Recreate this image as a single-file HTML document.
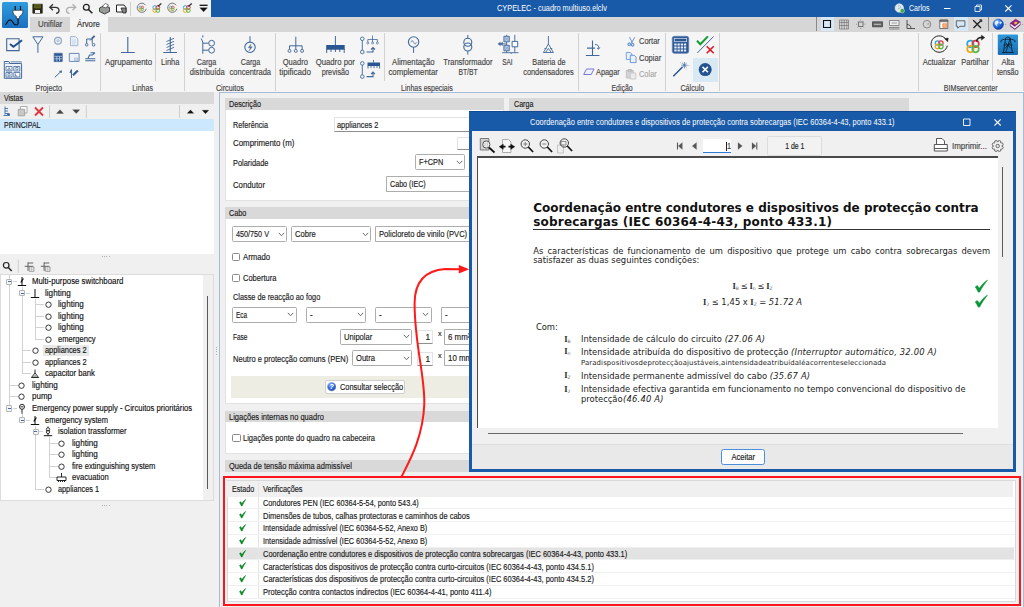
<!DOCTYPE html>
<html lang="pt"><head><meta charset="utf-8"><title>CYPELEC - cuadro multiuso.elclv</title>
<style>
html,body{margin:0;padding:0;}
body{width:1024px;height:607px;overflow:hidden;background:#f0f0f0;position:relative;font-family:"Liberation Sans",sans-serif;}
.r{position:absolute;box-sizing:border-box;display:block;}
.t{position:absolute;white-space:pre;display:block;-webkit-text-stroke:0.16px currentColor;}
</style></head><body>
<div class="r" style="left:0.0px;top:0.0px;width:1024.0px;height:16.5px;background:#f3f3f3;"></div>
<div class="r" style="left:211.0px;top:0.0px;width:813.0px;height:16.5px;background:#185aa7;"></div>
<div class="r" style="left:0.0px;top:16.5px;width:1024.0px;height:15.0px;background:#d6d6d6;"></div>
<div class="r" style="left:0.0px;top:16.5px;width:29.5px;height:15.0px;background:#f3f3f3;"></div>
<div class="r" style="left:69.5px;top:16.5px;width:38.0px;height:15.5px;background:#f5f5f5;"></div>
<div class="r" style="left:0.0px;top:31.5px;width:1024.0px;height:60.0px;background:#f5f5f5;"></div>
<div class="r" style="left:2px;top:2px;width:25.5px;height:26px;border-radius:1.5px;background:linear-gradient(#2e9ddf,#1a6fc0);"></div>
<svg class="r" style="left:2.0px;top:2.0px;" width="26" height="26" viewBox="0 0 26 26"><path d="M13.2 4v4.5M18.5 4v4.5" stroke="#111" stroke-width="1.2" fill="none"/><path d="M10.8 8.3h10.2c0 3.5-1.5 5-3.6 6.2v2.2h-3v-2.2c-2.1-1.2-3.6-2.700-3.600-6.200z" fill="#fff" stroke="#111" stroke-width=".6"/><path d="M16 16.500c0 4 1 6.500-2 6.500c-3.500 0-2.800-5.200-6-5.200c-2.500 0-2.600 3.600-4.600 5" stroke="#111" stroke-width="1.200" fill="none"/></svg>
<span class="t" style="left:37.6px;transform-origin:0 50%;top:17.5px;font-size:9.2px;line-height:12.0px;color:#444444;transform:scaleX(0.852);">Unifilar</span>
<span class="t" style="left:77.2px;transform-origin:0 50%;top:17.5px;font-size:9.2px;line-height:12.0px;color:#333;transform:scaleX(0.841);">Árvore</span>
<span class="t" style="left:497.0px;transform-origin:0 50%;top:1.6px;font-size:9.2px;line-height:12.0px;color:#fff;transform:scaleX(0.803);-webkit-text-stroke:0;">CYPELEC - cuadro multiuso.elclv</span>
<span class="t" style="left:908.5px;transform-origin:0 50%;top:1.6px;font-size:9.2px;line-height:12.0px;color:#fff;transform:scaleX(0.771);-webkit-text-stroke:0;">Carlos</span>
<div class="r" style="left:0.0px;top:92.0px;width:213.5px;height:12.0px;background:#d9d9d9;"></div>
<span class="t" style="left:3.5px;transform-origin:0 50%;top:92.0px;font-size:9.2px;line-height:12.0px;color:#1a1a1a;transform:scaleX(0.763);">Vistas</span>
<div class="r" style="left:0.0px;top:104.0px;width:213.5px;height:15.0px;background:#f0f0f0;"></div>
<div class="r" style="left:0.0px;top:119.0px;width:213.5px;height:12.0px;background:#cce8ff;"></div>
<span class="t" style="left:3.5px;transform-origin:0 50%;top:119.0px;font-size:9.2px;line-height:12.0px;color:#1a1a1a;transform:scaleX(0.762);">PRINCIPAL</span>
<div class="r" style="left:0.0px;top:131.0px;width:213.5px;height:122.5px;background:#ffffff;"></div>
<div class="r" style="left:219.0px;top:92.0px;width:805.0px;height:520.0px;background:#f0f0f0;border:1px solid #a6bbd6;"></div>
<div class="r" style="left:225.0px;top:97.9px;width:279.0px;height:103.3px;background:#ffffff;border:1px solid #e2e2e2;"></div>
<div class="r" style="left:225.0px;top:97.9px;width:279.0px;height:11.9px;background:#d9d9d9;"></div>
<span class="t" style="left:229.2px;transform-origin:0 50%;top:98.4px;font-size:9.2px;line-height:12.0px;color:#1a1a1a;transform:scaleX(0.782);">Descrição</span>
<div class="r" style="left:509.4px;top:97.9px;width:399.6px;height:12.7px;background:#d9d9d9;"></div>
<span class="t" style="left:513.7px;transform-origin:0 50%;top:98.3px;font-size:9.2px;line-height:12.0px;color:#1a1a1a;transform:scaleX(0.774);">Carga</span>
<div class="r" style="left:225.0px;top:207.3px;width:279.0px;height:197.0px;background:#ffffff;border:1px solid #e2e2e2;"></div>
<div class="r" style="left:225.0px;top:207.3px;width:279.0px;height:11.7px;background:#d9d9d9;"></div>
<span class="t" style="left:229.4px;transform-origin:0 50%;top:207.2px;font-size:9.2px;line-height:12.0px;color:#1a1a1a;transform:scaleX(0.791);">Cabo</span>
<div class="r" style="left:225.0px;top:411.2px;width:279.0px;height:42.6px;background:#ffffff;border:1px solid #e2e2e2;"></div>
<div class="r" style="left:225.0px;top:411.2px;width:279.0px;height:11.3px;background:#d9d9d9;"></div>
<span class="t" style="left:229.2px;transform-origin:0 50%;top:410.9px;font-size:9.2px;line-height:12.0px;color:#1a1a1a;transform:scaleX(0.818);">Ligações internas no quadro</span>
<div class="r" style="left:225.0px;top:460.0px;width:279.0px;height:12.0px;background:#d9d9d9;"></div>
<span class="t" style="left:229.2px;transform-origin:0 50%;top:460.0px;font-size:9.2px;line-height:12.0px;color:#1a1a1a;transform:scaleX(0.813);">Queda de tensão máxima admissível</span>
<div class="r" style="left:226.5px;top:479.5px;width:789.8px;height:122.0px;background:#ffffff;border:1px solid #d9d9d9;"></div>
<div class="r" style="left:227.0px;top:481.0px;width:786.0px;height:15.5px;background:#f0f0f0;"></div>
<div class="r" style="left:223.2px;top:476.3px;width:797.8px;height:129.4px;border:2.200px solid #ff141c;"></div>
<div class="r" style="left:0.0px;top:274.0px;width:213.5px;height:226.5px;background:#ffffff;border:1px solid #dcdcdc;"></div>
<div class="r" style="left:202.5px;top:275.0px;width:10.5px;height:224.5px;background:#f0f0f0;"></div>
<div class="r" style="left:206.8px;top:296.0px;width:1.3px;height:193.0px;background:#5a5a5a;"></div>
<div class="r" style="left:8.6px;top:275.0px;width:1.0px;height:129.9px;background:#d2d2d2;"></div>
<div class="r" style="left:21.9px;top:287.0px;width:1.0px;height:86.3px;background:#d2d2d2;"></div>
<div class="r" style="left:35.2px;top:298.5px;width:1.0px;height:40.2px;background:#d2d2d2;"></div>
<div class="r" style="left:21.9px;top:413.9px;width:1.0px;height:3.5px;background:#d2d2d2;"></div>
<div class="r" style="left:35.2px;top:425.5px;width:1.0px;height:63.2px;background:#d2d2d2;"></div>
<div class="r" style="left:48.5px;top:437.0px;width:1.0px;height:40.2px;background:#d2d2d2;"></div>
<div class="r" style="left:43.0px;top:344.5px;width:45.5px;height:11.5px;background:#e8e8e8;"></div>
<div class="r" style="left:12.6px;top:281.0px;width:4.1px;height:1.0px;background:#d2d2d2;"></div>
<div class="r" style="left:6.0px;top:278.5px;width:6.2px;height:6.2px;background:#f6f6f6;border:1px solid #b4b4b4;border-radius:1px;"></div>
<div class="r" style="left:7.5px;top:281.1px;width:3.2px;height:1.0px;background:#4468b0;"></div>
<svg class="r" style="left:16.7px;top:276.0px;" width="10" height="12" viewBox="0 0 10 12"><path d="M5 1v8.500M0.800 9.500h8.400" stroke="#111" stroke-width="1" fill="none"/><path d="M3.800 6.500l2.600-4" stroke="#111" stroke-width="1.300"/></svg>
<span class="t" style="left:31.6px;transform-origin:0 50%;top:275.0px;font-size:9.2px;line-height:12.0px;color:#111;transform:scaleX(0.852);">Multi-purpose switchboard</span>
<div class="r" style="left:25.9px;top:292.5px;width:4.1px;height:1.0px;background:#d2d2d2;"></div>
<div class="r" style="left:19.3px;top:290.0px;width:6.2px;height:6.2px;background:#f6f6f6;border:1px solid #b4b4b4;border-radius:1px;"></div>
<div class="r" style="left:20.8px;top:292.6px;width:3.2px;height:1.0px;background:#4468b0;"></div>
<svg class="r" style="left:30.0px;top:287.5px;" width="10" height="12" viewBox="0 0 10 12"><path d="M5 1v8.500M0.800 9.500h8.400" stroke="#111" stroke-width="1" fill="none"/></svg>
<span class="t" style="left:44.9px;transform-origin:0 50%;top:286.5px;font-size:9.2px;line-height:12.0px;color:#111;transform:scaleX(0.885);">lighting</span>
<div class="r" style="left:35.2px;top:304.1px;width:9.1px;height:1.0px;background:#d2d2d2;"></div>
<svg class="r" style="left:43.8px;top:300.1px;" width="9" height="9" viewBox="0 0 9 9"><circle cx="4.5" cy="4.700" r="2.700" fill="#fff" stroke="#222" stroke-width="0.9"/></svg>
<span class="t" style="left:58.2px;transform-origin:0 50%;top:298.1px;font-size:9.2px;line-height:12.0px;color:#111;transform:scaleX(0.885);">lighting</span>
<div class="r" style="left:35.2px;top:315.6px;width:9.1px;height:1.0px;background:#d2d2d2;"></div>
<svg class="r" style="left:43.8px;top:311.6px;" width="9" height="9" viewBox="0 0 9 9"><circle cx="4.5" cy="4.700" r="2.700" fill="#fff" stroke="#222" stroke-width="0.9"/></svg>
<span class="t" style="left:58.2px;transform-origin:0 50%;top:309.6px;font-size:9.2px;line-height:12.0px;color:#111;transform:scaleX(0.885);">lighting</span>
<div class="r" style="left:35.2px;top:327.2px;width:9.1px;height:1.0px;background:#d2d2d2;"></div>
<svg class="r" style="left:43.8px;top:323.2px;" width="9" height="9" viewBox="0 0 9 9"><circle cx="4.5" cy="4.700" r="2.700" fill="#fff" stroke="#222" stroke-width="0.9"/></svg>
<span class="t" style="left:58.2px;transform-origin:0 50%;top:321.2px;font-size:9.2px;line-height:12.0px;color:#111;transform:scaleX(0.885);">lighting</span>
<div class="r" style="left:35.2px;top:338.7px;width:9.1px;height:1.0px;background:#d2d2d2;"></div>
<svg class="r" style="left:43.8px;top:334.7px;" width="9" height="9" viewBox="0 0 9 9"><circle cx="4.5" cy="4.700" r="2.700" fill="#fff" stroke="#222" stroke-width="0.9"/></svg>
<span class="t" style="left:58.2px;transform-origin:0 50%;top:332.7px;font-size:9.2px;line-height:12.0px;color:#111;transform:scaleX(0.826);">emergency</span>
<div class="r" style="left:21.9px;top:350.2px;width:9.1px;height:1.0px;background:#d2d2d2;"></div>
<svg class="r" style="left:30.5px;top:346.2px;" width="9" height="9" viewBox="0 0 9 9"><circle cx="4.5" cy="4.700" r="2.700" fill="#fff" stroke="#222" stroke-width="0.9"/></svg>
<span class="t" style="left:44.9px;transform-origin:0 50%;top:344.2px;font-size:9.2px;line-height:12.0px;color:#111;transform:scaleX(0.807);">appliances 2</span>
<div class="r" style="left:21.9px;top:361.8px;width:9.1px;height:1.0px;background:#d2d2d2;"></div>
<svg class="r" style="left:30.5px;top:357.8px;" width="9" height="9" viewBox="0 0 9 9"><circle cx="4.5" cy="4.700" r="2.700" fill="#fff" stroke="#222" stroke-width="0.9"/></svg>
<span class="t" style="left:44.9px;transform-origin:0 50%;top:355.8px;font-size:9.2px;line-height:12.0px;color:#111;transform:scaleX(0.807);">appliances 2</span>
<div class="r" style="left:21.9px;top:373.3px;width:9.1px;height:1.0px;background:#d2d2d2;"></div>
<svg class="r" style="left:30.0px;top:368.3px;" width="10" height="12" viewBox="0 0 10 12"><path d="M5 1.500v3.500M5 5l-3.600 4.500h7.200z" stroke="#111" stroke-width="0.9" fill="none"/><path d="M3 9.500l2-2 2 2" stroke="#111" stroke-width="0.7" fill="none"/></svg>
<span class="t" style="left:44.9px;transform-origin:0 50%;top:367.3px;font-size:9.2px;line-height:12.0px;color:#111;transform:scaleX(0.836);">capacitor bank</span>
<div class="r" style="left:8.6px;top:384.9px;width:9.1px;height:1.0px;background:#d2d2d2;"></div>
<svg class="r" style="left:17.2px;top:380.9px;" width="9" height="9" viewBox="0 0 9 9"><circle cx="4.5" cy="4.700" r="2.700" fill="#fff" stroke="#222" stroke-width="0.9"/></svg>
<span class="t" style="left:31.6px;transform-origin:0 50%;top:378.9px;font-size:9.2px;line-height:12.0px;color:#111;transform:scaleX(0.885);">lighting</span>
<div class="r" style="left:8.6px;top:396.4px;width:9.1px;height:1.0px;background:#d2d2d2;"></div>
<svg class="r" style="left:17.2px;top:392.4px;" width="9" height="9" viewBox="0 0 9 9"><circle cx="4.5" cy="4.700" r="2.700" fill="#fff" stroke="#222" stroke-width="0.9"/></svg>
<span class="t" style="left:31.6px;transform-origin:0 50%;top:390.4px;font-size:9.2px;line-height:12.0px;color:#111;transform:scaleX(0.869);">pump</span>
<div class="r" style="left:12.6px;top:407.9px;width:4.1px;height:1.0px;background:#d2d2d2;"></div>
<div class="r" style="left:6.0px;top:405.4px;width:6.2px;height:6.2px;background:#f6f6f6;border:1px solid #b4b4b4;border-radius:1px;"></div>
<div class="r" style="left:7.5px;top:408.0px;width:3.2px;height:1.0px;background:#4468b0;"></div>
<svg class="r" style="left:16.7px;top:402.9px;" width="10" height="12" viewBox="0 0 10 12"><circle cx="5" cy="3.800" r="2.500" fill="#fff" stroke="#111" stroke-width="0.9"/><path d="M5 6.300v4.500M3.500 3.800h3" stroke="#111" stroke-width="0.9" fill="none"/></svg>
<span class="t" style="left:31.6px;transform-origin:0 50%;top:401.9px;font-size:9.2px;line-height:12.0px;color:#111;transform:scaleX(0.832);">Emergency power supply - Circuitos prioritários</span>
<div class="r" style="left:25.9px;top:419.5px;width:4.1px;height:1.0px;background:#d2d2d2;"></div>
<div class="r" style="left:19.3px;top:417.0px;width:6.2px;height:6.2px;background:#f6f6f6;border:1px solid #b4b4b4;border-radius:1px;"></div>
<div class="r" style="left:20.8px;top:419.6px;width:3.2px;height:1.0px;background:#4468b0;"></div>
<svg class="r" style="left:30.0px;top:414.5px;" width="10" height="12" viewBox="0 0 10 12"><path d="M5 1v8.500M0.800 9.500h8.400" stroke="#111" stroke-width="1" fill="none"/><path d="M3.800 6.500l2.600-4" stroke="#111" stroke-width="1.300"/></svg>
<span class="t" style="left:44.9px;transform-origin:0 50%;top:413.5px;font-size:9.2px;line-height:12.0px;color:#111;transform:scaleX(0.816);">emergency system</span>
<div class="r" style="left:39.2px;top:431.0px;width:4.1px;height:1.0px;background:#d2d2d2;"></div>
<div class="r" style="left:32.6px;top:428.5px;width:6.2px;height:6.2px;background:#f6f6f6;border:1px solid #b4b4b4;border-radius:1px;"></div>
<div class="r" style="left:34.1px;top:431.1px;width:3.2px;height:1.0px;background:#4468b0;"></div>
<svg class="r" style="left:43.3px;top:426.0px;" width="10" height="12" viewBox="0 0 10 12"><circle cx="5" cy="3.400" r="1.700" fill="none" stroke="#111" stroke-width="0.8"/><circle cx="5" cy="5.900" r="1.700" fill="none" stroke="#111" stroke-width="0.8"/><path d="M5 0.500v1.200M5 7.600v2M0.800 9.700h8.400" stroke="#111" stroke-width="1" fill="none"/></svg>
<span class="t" style="left:58.2px;transform-origin:0 50%;top:425.0px;font-size:9.2px;line-height:12.0px;color:#111;transform:scaleX(0.829);">isolation trassformer</span>
<div class="r" style="left:48.5px;top:442.6px;width:9.1px;height:1.0px;background:#d2d2d2;"></div>
<svg class="r" style="left:57.1px;top:438.6px;" width="9" height="9" viewBox="0 0 9 9"><circle cx="4.5" cy="4.700" r="2.700" fill="#fff" stroke="#222" stroke-width="0.9"/></svg>
<span class="t" style="left:71.5px;transform-origin:0 50%;top:436.6px;font-size:9.2px;line-height:12.0px;color:#111;transform:scaleX(0.885);">lighting</span>
<div class="r" style="left:48.5px;top:454.1px;width:9.1px;height:1.0px;background:#d2d2d2;"></div>
<svg class="r" style="left:57.1px;top:450.1px;" width="9" height="9" viewBox="0 0 9 9"><circle cx="4.5" cy="4.700" r="2.700" fill="#fff" stroke="#222" stroke-width="0.9"/></svg>
<span class="t" style="left:71.5px;transform-origin:0 50%;top:448.1px;font-size:9.2px;line-height:12.0px;color:#111;transform:scaleX(0.885);">lighting</span>
<div class="r" style="left:48.5px;top:465.6px;width:9.1px;height:1.0px;background:#d2d2d2;"></div>
<svg class="r" style="left:57.1px;top:461.6px;" width="9" height="9" viewBox="0 0 9 9"><circle cx="4.5" cy="4.700" r="2.700" fill="#fff" stroke="#222" stroke-width="0.9"/></svg>
<span class="t" style="left:71.5px;transform-origin:0 50%;top:459.6px;font-size:9.2px;line-height:12.0px;color:#111;transform:scaleX(0.829);">fire extinguishing system</span>
<div class="r" style="left:48.5px;top:477.2px;width:9.1px;height:1.0px;background:#d2d2d2;"></div>
<svg class="r" style="left:56.1px;top:472.2px;" width="11" height="12" viewBox="0 0 11 12"><path d="M5.500 1v4M1 5h9v3.500h-9zM2.500 8.500v1.500M4.500 8.500v1.500M6.500 8.500v1.500M8.500 8.500v1.500" stroke="#111" stroke-width="0.9" fill="none"/></svg>
<span class="t" style="left:71.5px;transform-origin:0 50%;top:471.2px;font-size:9.2px;line-height:12.0px;color:#111;transform:scaleX(0.825);">evacuation</span>
<div class="r" style="left:35.2px;top:488.7px;width:9.1px;height:1.0px;background:#d2d2d2;"></div>
<svg class="r" style="left:43.8px;top:484.7px;" width="9" height="9" viewBox="0 0 9 9"><circle cx="4.5" cy="4.700" r="2.700" fill="#fff" stroke="#222" stroke-width="0.9"/></svg>
<span class="t" style="left:58.2px;transform-origin:0 50%;top:482.7px;font-size:9.2px;line-height:12.0px;color:#111;transform:scaleX(0.794);">appliances 1</span>
<div class="r" style="left:102.0px;top:256.3px;width:1.1px;height:1.1px;background:#b0b0b0;"></div>
<div class="r" style="left:104.2px;top:256.3px;width:1.1px;height:1.1px;background:#b0b0b0;"></div>
<div class="r" style="left:106.4px;top:256.3px;width:1.1px;height:1.1px;background:#b0b0b0;"></div>
<div class="r" style="left:108.6px;top:256.3px;width:1.1px;height:1.1px;background:#b0b0b0;"></div>
<div class="r" style="left:102.0px;top:504.6px;width:1.1px;height:1.1px;background:#b0b0b0;"></div>
<div class="r" style="left:104.2px;top:504.6px;width:1.1px;height:1.1px;background:#b0b0b0;"></div>
<div class="r" style="left:106.4px;top:504.6px;width:1.1px;height:1.1px;background:#b0b0b0;"></div>
<div class="r" style="left:108.6px;top:504.6px;width:1.1px;height:1.1px;background:#b0b0b0;"></div>
<div class="r" style="left:215.7px;top:347.0px;width:1.1px;height:1.1px;background:#b0b0b0;"></div>
<div class="r" style="left:215.7px;top:349.2px;width:1.1px;height:1.1px;background:#b0b0b0;"></div>
<div class="r" style="left:215.7px;top:351.4px;width:1.1px;height:1.1px;background:#b0b0b0;"></div>
<div class="r" style="left:215.7px;top:353.6px;width:1.1px;height:1.1px;background:#b0b0b0;"></div>
<div class="r" style="left:100.1px;top:33.2px;width:1.0px;height:57.5px;background:#d2d2d2;"></div>
<div class="r" style="left:184.2px;top:33.2px;width:1.0px;height:57.5px;background:#d2d2d2;"></div>
<div class="r" style="left:274.9px;top:33.2px;width:1.0px;height:57.5px;background:#d2d2d2;"></div>
<div class="r" style="left:577.8px;top:33.2px;width:1.0px;height:57.5px;background:#d2d2d2;"></div>
<div class="r" style="left:665.2px;top:33.2px;width:1.0px;height:57.5px;background:#d2d2d2;"></div>
<div class="r" style="left:719.1px;top:33.2px;width:1.0px;height:57.5px;background:#d2d2d2;"></div>
<div class="r" style="left:918.2px;top:33.2px;width:1.0px;height:57.5px;background:#d2d2d2;"></div>
<div class="r" style="left:1022.8px;top:33.2px;width:1.0px;height:57.5px;background:#d2d2d2;"></div>
<div class="r" style="left:155.4px;top:33.2px;width:1.0px;height:47.5px;background:#d2d2d2;"></div>
<div class="r" style="left:384.1px;top:33.2px;width:1.0px;height:47.5px;background:#d2d2d2;"></div>
<div class="r" style="left:992.4px;top:33.2px;width:1.0px;height:47.5px;background:#d2d2d2;"></div>
<div class="r" style="left:130.0px;top:1.5px;width:1.0px;height:14.0px;background:#cfcfcf;"></div>
<div class="r" style="left:816.3px;top:17.3px;width:1.0px;height:13.5px;background:#8a8a8a;"></div>
<div class="r" style="left:988.0px;top:17.3px;width:1.0px;height:13.5px;background:#8a8a8a;"></div>
<span class="t" style="left:100.5px;transform-origin:50% 50%;top:56.0px;font-size:9.2px;line-height:12.0px;color:#444444;transform:scaleX(0.855);">Agrupamento</span>
<span class="t" style="left:158.6px;transform-origin:50% 50%;top:56.0px;font-size:9.2px;line-height:12.0px;color:#444444;transform:scaleX(0.811);">Linha</span>
<span class="t" style="left:194.0px;transform-origin:50% 50%;top:56.0px;font-size:9.2px;line-height:12.0px;color:#444444;transform:scaleX(0.778);">Carga</span>
<span class="t" style="left:185.5px;transform-origin:50% 50%;top:65.5px;font-size:9.2px;line-height:12.0px;color:#444444;transform:scaleX(0.825);">distribuída</span>
<span class="t" style="left:237.7px;transform-origin:50% 50%;top:56.0px;font-size:9.2px;line-height:12.0px;color:#444444;transform:scaleX(0.778);">Carga</span>
<span class="t" style="left:224.9px;transform-origin:50% 50%;top:65.5px;font-size:9.2px;line-height:12.0px;color:#444444;transform:scaleX(0.820);">concentrada</span>
<span class="t" style="left:280.1px;transform-origin:50% 50%;top:56.0px;font-size:9.2px;line-height:12.0px;color:#444444;transform:scaleX(0.823);">Quadro</span>
<span class="t" style="left:277.4px;transform-origin:50% 50%;top:65.5px;font-size:9.2px;line-height:12.0px;color:#444444;transform:scaleX(0.874);">tipificado</span>
<span class="t" style="left:312.3px;transform-origin:50% 50%;top:56.0px;font-size:9.2px;line-height:12.0px;color:#444444;transform:scaleX(0.843);">Quadro por</span>
<span class="t" style="left:317.9px;transform-origin:50% 50%;top:65.5px;font-size:9.2px;line-height:12.0px;color:#444444;transform:scaleX(0.791);">previsão</span>
<span class="t" style="left:387.7px;transform-origin:50% 50%;top:56.0px;font-size:9.2px;line-height:12.0px;color:#444444;transform:scaleX(0.840);">Alimentação</span>
<span class="t" style="left:384.1px;transform-origin:50% 50%;top:65.5px;font-size:9.2px;line-height:12.0px;color:#444444;transform:scaleX(0.849);">complementar</span>
<span class="t" style="left:437.6px;transform-origin:50% 50%;top:56.0px;font-size:9.2px;line-height:12.0px;color:#444444;transform:scaleX(0.821);">Transformador</span>
<span class="t" style="left:455.1px;transform-origin:50% 50%;top:65.5px;font-size:9.2px;line-height:12.0px;color:#444444;transform:scaleX(0.738);">BT/BT</span>
<span class="t" style="left:500.4px;transform-origin:50% 50%;top:56.0px;font-size:9.2px;line-height:12.0px;color:#444444;transform:scaleX(0.708);">SAI</span>
<span class="t" style="left:527.6px;transform-origin:50% 50%;top:56.0px;font-size:9.2px;line-height:12.0px;color:#444444;transform:scaleX(0.793);">Bateria de</span>
<span class="t" style="left:517.0px;transform-origin:50% 50%;top:65.5px;font-size:9.2px;line-height:12.0px;color:#444444;transform:scaleX(0.803);">condensadores</span>
<span class="t" style="left:919.3px;transform-origin:50% 50%;top:56.2px;font-size:9.2px;line-height:12.0px;color:#444444;transform:scaleX(0.817);">Actualizar</span>
<span class="t" style="left:957.8px;transform-origin:50% 50%;top:56.2px;font-size:9.2px;line-height:12.0px;color:#444444;transform:scaleX(0.806);">Partilhar</span>
<span class="t" style="left:1000.3px;transform-origin:50% 50%;top:56.2px;font-size:9.2px;line-height:12.0px;color:#444444;transform:scaleX(0.820);">Alta</span>
<span class="t" style="left:994.3px;transform-origin:50% 50%;top:65.6px;font-size:9.2px;line-height:12.0px;color:#444444;transform:scaleX(0.786);">tensão</span>
<span class="t" style="left:32.2px;transform-origin:50% 50%;top:81.7px;font-size:9.2px;line-height:12.0px;color:#444444;transform:scaleX(0.785);">Projecto</span>
<span class="t" style="left:128.5px;transform-origin:50% 50%;top:81.7px;font-size:9.2px;line-height:12.0px;color:#444444;transform:scaleX(0.765);">Linhas</span>
<span class="t" style="left:211.9px;transform-origin:50% 50%;top:81.7px;font-size:9.2px;line-height:12.0px;color:#444444;transform:scaleX(0.782);">Circuitos</span>
<span class="t" style="left:392.9px;transform-origin:50% 50%;top:81.7px;font-size:9.2px;line-height:12.0px;color:#444444;transform:scaleX(0.761);">Linhas especiais</span>
<span class="t" style="left:608.1px;transform-origin:50% 50%;top:81.7px;font-size:9.2px;line-height:12.0px;color:#444444;transform:scaleX(0.754);">Edição</span>
<span class="t" style="left:677.3px;transform-origin:50% 50%;top:81.7px;font-size:9.2px;line-height:12.0px;color:#444444;transform:scaleX(0.772);">Cálculo</span>
<span class="t" style="left:936.3px;transform-origin:50% 50%;top:81.7px;font-size:9.2px;line-height:12.0px;color:#444444;transform:scaleX(0.774);">BIMserver.center</span>
<span class="t" style="left:596.2px;transform-origin:0 50%;top:66.0px;font-size:9.2px;line-height:12.0px;color:#444444;transform:scaleX(0.801);">Apagar</span>
<span class="t" style="left:639.0px;transform-origin:0 50%;top:34.8px;font-size:9.2px;line-height:12.0px;color:#444444;transform:scaleX(0.814);">Cortar</span>
<span class="t" style="left:639.0px;transform-origin:0 50%;top:51.5px;font-size:9.2px;line-height:12.0px;color:#444444;transform:scaleX(0.819);">Copiar</span>
<span class="t" style="left:639.0px;transform-origin:0 50%;top:68.3px;font-size:9.2px;line-height:12.0px;color:#a8a8a8;transform:scaleX(0.810);">Colar</span>
<div class="r" style="left:693.0px;top:57.5px;width:24.6px;height:24.2px;background:#d9e9f4;"></div>
<div class="r" style="left:820.5px;top:17.3px;width:13.7px;height:14.0px;background:#d6e8f5;"></div>
<div class="r" style="left:953.5px;top:17.3px;width:14.7px;height:14.0px;background:#d6e8f5;"></div>
<svg class="r" style="left:0.0px;top:0.0px;" width="1024" height="92" viewBox="0 0 1024 92"><path d="M6.700 38.800h12.400v11.800h-12.400z" stroke="#41689c" stroke-width="1.1" fill="none" /><path d="M10 44l3.400 2.800 8.600-6.600" stroke="#1f4e8c" stroke-width="1.9" fill="none" /><path d="M32.800 36.800h10.200l-5.100 7.700zM37.900 44.500v8.300" stroke="#41689c" stroke-width="1" fill="none" /><path d="M4.300 63.500h17.300v14.800h-17.300z" stroke="#41689c" stroke-width="1" fill="#eef3fa" /><path d="M4.300 63.500v-2h4.500l1.200 2" stroke="#41689c" stroke-width="1" fill="#eef3fa" /><path d="M10.500 61.800h10.500v1.700" stroke="#9aaac4" stroke-width="1.4" fill="none" /><path d="M6 66.500h6v4.500h-6zM13.800 66.500h6v4.500h-6zM6 72.500h6v4.500h-6zM13.800 72.500h6v4.500h-6z" stroke="#41689c" stroke-width="0.8" fill="#fff" /><path d="M7.500 70l1.500-2.400 1.500 2.400zM15.800 67.500h2.200v2.200h-2.200zM8 73.500h2v2.500h-2zM15.500 73.500v2.500h2" stroke="#41689c" stroke-width="0.7" fill="none" /><circle cx="58" cy="40.7" r="3.4" stroke="#8aa3c6" stroke-width="1.2" fill="none"/><circle cx="58" cy="40.7" r="1.1" stroke="#8aa3c6" stroke-width="0.8" fill="none"/><path d="M70.500 36.600h5l2.300 2.300v6.800h-7.300z" stroke="#9ab0cf" stroke-width="0.9" fill="#eaf0f8" /><path d="M72 40h4M72 42h4M72 44h3" stroke="#b4c4dc" stroke-width="0.6" fill="none" /><path d="M86.700 43.500v-4.500h5.500M92.200 39v4.500M90 40.500l4-4" stroke="#41689c" stroke-width="1" fill="none" /><circle cx="86.7" cy="44.8" r="1.3" stroke="#41689c" stroke-width="0.9" fill="none"/><circle cx="93.6" cy="44.8" r="1.3" stroke="#41689c" stroke-width="0.9" fill="none"/><path d="M92 38.500l2.600-2.600" stroke="#41689c" stroke-width="1.8" fill="none" /><path d="M54.200 53.300h8v8.300h-8z" stroke="#41689c" stroke-width="0.8" fill="#2f5a96" /><path d="M54.500 56.300h7.500M54.500 58.800h7.500M56.800 56.300v5M59.500 56.300v5" stroke="#cfdcf0" stroke-width="0.7" fill="none" /><path d="M69.300 53.400h9.800v8h-9.800z" stroke="#6a8ab8" stroke-width="1" fill="#eef3fa" /><path d="M74.500 58h3.500v2.500h-3.500z" stroke="#9ab0cf" stroke-width="0.6" fill="#cdd9ea" /><path d="M85.300 58.800h10M85.300 60.800h10" stroke="#41689c" stroke-width="1.1" fill="none" /><path d="M88 58.500l1.500-3.500h3l2.500-2.500M90.500 52.700h4.500" stroke="#41689c" stroke-width="1.1" fill="none" /><path d="M54.800 77.300l6.200-5.800" stroke="#41689c" stroke-width="1" fill="none" /><path d="M59.500 71.200l2.200-.5-.5 2.200z" stroke="#41689c" stroke-width="0.6" fill="#41689c" /><path d="M71.500 69.500v8.500" stroke="#41689c" stroke-width="1" fill="none" /><path d="M72.500 74.500l4.500-4.500 1.300 1.300-4.500 4.500z" stroke="#41689c" stroke-width="0.5" fill="#2f5a96" /><path d="M70 73l1.500-3.500" stroke="#41689c" stroke-width="1.2" fill="none" /><path d="M127.800 37v15.500M121 52.500h13.800" stroke="#41689c" stroke-width="1.1" fill="none" /><path d="M170.300 37v15.500M163.300 52.500h13.700" stroke="#41689c" stroke-width="1.1" fill="none" /><path d="M166.500 41.500l7.600-3.200M166.500 44.500l7.600-3.200M166.500 47.500l7.600-3.200M166.500 50.500l7.600-3.200" stroke="#41689c" stroke-width="0.9" fill="none" /><path d="M202.800 35.300v2.200M201.200 38.500l1.600 3.500M202.800 42v11.700M202.800 43.200h5.800M202.800 50.200h5.800" stroke="#41689c" stroke-width="1" fill="none" /><circle cx="211.6" cy="43.2" r="2.9" stroke="#41689c" stroke-width="1" fill="none"/><circle cx="211.6" cy="50.2" r="2.9" stroke="#41689c" stroke-width="1" fill="none"/><path d="M250 36.200v5.800" stroke="#41689c" stroke-width="1" fill="none" /><circle cx="250" cy="47.3" r="5.2" stroke="#41689c" stroke-width="1.1" fill="none"/><path d="M251 44l-2.800 3.800h2.200l-1.400 3.200 3.400-4.200h-2.200z" stroke="#41689c" stroke-width="0.3" fill="#41689c" /><path d="M295.800 36.700v9.100M289.500 49.300v-3.500h12.600v3.500M295.800 45.800v3.500" stroke="#41689c" stroke-width="1" fill="none" /><circle cx="289.5" cy="50.9" r="1.5" stroke="#41689c" stroke-width="0.9" fill="none"/><circle cx="295.8" cy="50.9" r="1.5" stroke="#41689c" stroke-width="0.9" fill="none"/><circle cx="302.1" cy="50.9" r="1.5" stroke="#41689c" stroke-width="0.9" fill="none"/><path d="M335.400 36v9" stroke="#41689c" stroke-width="1" fill="none" /><path d="M326.200 45h18.500v4.700h-18.500z" stroke="#41689c" stroke-width="0" fill="#2a5691" /><path d="M326.700 49v4M331 49v3M335.400 49v3M339.800 49v3M344.200 49v4" stroke="#2a5691" stroke-width="0.9" fill="none" /><circle cx="362.3" cy="38.8" r="1.8" stroke="#41689c" stroke-width="0.9" fill="none"/><circle cx="362.3" cy="52" r="1.8" stroke="#41689c" stroke-width="0.9" fill="none"/><path d="M362.300 40.6v9.600" stroke="#41689c" stroke-width="0.9" fill="none" /><path d="M366.500 52h6.500v-3.500M371 49.5l2-2 2 2" stroke="#41689c" stroke-width="1.1" fill="none" /><circle cx="362.3" cy="63.4" r="1.8" stroke="#41689c" stroke-width="0.9" fill="none"/><circle cx="362.3" cy="76.6" r="1.8" stroke="#41689c" stroke-width="0.9" fill="none"/><path d="M362.300 65.2v9.600" stroke="#41689c" stroke-width="0.9" fill="none" /><path d="M366.500 76.6h6.500v-3.500M371 74.1l2-2 2 2" stroke="#41689c" stroke-width="1.1" fill="none" /><path d="M372.500 35.500v4M367.800 42v-2.500h9.600v2.500M372.500 39.500v2.500" stroke="#41689c" stroke-width="0.8" fill="none" /><circle cx="367.8" cy="43" r="1" stroke="#41689c" stroke-width="0.7" fill="none"/><circle cx="372.6" cy="43" r="1" stroke="#41689c" stroke-width="0.7" fill="none"/><circle cx="377.4" cy="43" r="1" stroke="#41689c" stroke-width="0.7" fill="none"/><path d="M373.500 60v2.500" stroke="#41689c" stroke-width="0.9" fill="none" /><path d="M367.500 62.500h12.500v3.500h-12.500z" stroke="#41689c" stroke-width="0" fill="#2a5691" /><path d="M368 66v2.500M371 66v2M374 66v2M377 66v2M379.600 66v2.500" stroke="#2a5691" stroke-width="0.8" fill="none" /><circle cx="413.6" cy="42" r="5.2" stroke="#41689c" stroke-width="1.1" fill="none"/><path d="M413.600 47.200v5.700" stroke="#41689c" stroke-width="1" fill="none" /><path d="M410.800 42.300c.9-2.200 1.900-2.200 2.800 0s1.900 2.200 2.800 0" stroke="#41689c" stroke-width="0.8" fill="none" /><path d="M467.800 35v3.300M467.800 51v3.600" stroke="#41689c" stroke-width="1" fill="none" /><circle cx="467.8" cy="42.3" r="4" stroke="#41689c" stroke-width="1.1" fill="none"/><circle cx="467.8" cy="47" r="4" stroke="#41689c" stroke-width="1.1" fill="none"/><path d="M506.600 34.800v1.500M506.600 41.800v3.500M506.600 50.800v1.900M514.800 34.800v6.600M514.800 46.800v5.900M502.100 52.700h16.400M498.500 43.900h8" stroke="#41689c" stroke-width="0.9" fill="none" /><path d="M503.900 36.300h5.400v5.500h-5.400zM503.900 45.300h5.400v5.500h-5.400z" stroke="#41689c" stroke-width="0.9" fill="#b9c9e0" /><path d="M504.500 37l4.200 4.200M508.700 37l-4.200 4.200M504.500 46l4.200 4.200M508.700 46l-4.200 4.200" stroke="#6f8fbd" stroke-width="0.6" fill="none" /><path d="M512.100 41.400h5.600v5.400h-5.600z" stroke="#41689c" stroke-width="1" fill="#fff" /><path d="M500.300 42.100l-2.200 1.800 2.200 1.800zM502.600 42.100l-2.200 1.800 2.200 1.800z" stroke="#41689c" stroke-width="0.4" fill="#41689c" /><path d="M510.500 52.700l.8 1.300.8-1.300" stroke="#41689c" stroke-width="0.5" fill="none" /><path d="M548.400 36v8M548.400 44l-5 8.500h10zM545.500 52.500l2.900-4 2.900 4M544.500 48.500h2M550.300 48.500h2" stroke="#41689c" stroke-width="0.9" fill="none" /><path d="M592.500 40.500v15M585.900 55.500h13.500M587 48.100h8" stroke="#41689c" stroke-width="1.1" fill="none" /><path d="M595 44.500c3 0 4.200 1.500 3.600 4.200M597 48l1.600 1.200 1.200-1.800" stroke="#41689c" stroke-width="0.9" fill="none" /><path d="M586.500 69h7.500l-2.800 5.500h-7.500z" stroke="#7a78d8" stroke-width="1" fill="#f1f0fc" /><path d="M629.500 37l2.800 6M634.800 37.200l-3.500 6" stroke="#5b8bd0" stroke-width="0.9" fill="none" /><circle cx="629.3" cy="44.3" r="1.4" stroke="#4a7ec8" stroke-width="1" fill="#cfe0f7"/><circle cx="632.6" cy="44.8" r="1.4" stroke="#4a7ec8" stroke-width="1" fill="#cfe0f7"/><path d="M626.300 52.500h4l1.500 1.500v5.500h-5.500z" stroke="#6b9be0" stroke-width="0.9" fill="#eaf1fd" /><path d="M630.300 55.300h4l1.800 1.800v5.500h-5.800z" stroke="#5d90dc" stroke-width="0.9" fill="#eaf1fd" /><path d="M626.300 70.500h7v7.500h-7z" stroke="#bdbdbd" stroke-width="0.9" fill="#d4d4d4" /><path d="M628 69.500h3.600v1.800h-3.600z" stroke="#b0b0b0" stroke-width="0.6" fill="#c4c4c4" /><path d="M630.300 73h5.500v6h-5.500z" stroke="#c2c2c2" stroke-width="0.8" fill="#ececec" /><rect x="672.300" y="36.300" width="16.400" height="17" rx="2" fill="#2b5792" stroke="#5f83b6" stroke-width=".8"/><path d="M674.500 38.500h12v3.200h-12z" stroke="#41689c" stroke-width="0" fill="#2b5792" stroke-opacity="0"/><rect x="674.300" y="38.300" width="12.400" height="3.400" fill="none" stroke="#dfe8f4" stroke-width=".7"/><rect x="674.3" y="43.5" width="2.300" height="2" fill="#e8eef7"/><rect x="677.5" y="43.5" width="2.300" height="2" fill="#e8eef7"/><rect x="680.7" y="43.5" width="2.300" height="2" fill="#e8eef7"/><rect x="683.9" y="43.5" width="2.300" height="2" fill="#e8eef7"/><rect x="674.3" y="46.5" width="2.300" height="2" fill="#e8eef7"/><rect x="677.5" y="46.5" width="2.300" height="2" fill="#e8eef7"/><rect x="680.7" y="46.5" width="2.300" height="2" fill="#e8eef7"/><rect x="683.9" y="46.5" width="2.300" height="2" fill="#e8eef7"/><rect x="674.3" y="49.5" width="2.300" height="2" fill="#e8eef7"/><rect x="677.5" y="49.5" width="2.300" height="2" fill="#e8eef7"/><rect x="680.7" y="49.5" width="2.300" height="2" fill="#e8eef7"/><rect x="683.9" y="49.5" width="2.300" height="2" fill="#e8eef7"/><path d="M697.300 52.900l16.400-16.500" stroke="#3c67a3" stroke-width="1" fill="none" /><path d="M697 40.800l3.300 3.400 7.600-7.800" stroke="#0f9b34" stroke-width="2" fill="none" /><path d="M706.700 46.200l7 7M713.700 46.200l-7 7" stroke="#e0162b" stroke-width="1.6" fill="none" /><path d="M673.300 76.300l9.200-9.200" stroke="#23508c" stroke-width="1.4" fill="none" /><path d="M684.400 62v6.400M681.200 65.200h6.400M682.200 63l4.400 4.400M686.600 63l-4.400 4.400" stroke="#3c67a3" stroke-width="0.7" fill="none" /><path d="M688.500 65.500h.8M686 69.500l.6.600M680.200 62.500l.6.600" stroke="#7a98c4" stroke-width="0.7" fill="none" /><circle cx="705.2" cy="69.6" r="6.5" stroke="#23528f" stroke-width="0" fill="#23528f"/><path d="M702.500 66.900l5.400 5.400M707.900 66.900l-5.400 5.400" stroke="#fff" stroke-width="1.5" fill="none" /><path d="M946.500 40.200a8.200 8.200 0 1 0 .8 5.500" stroke="#222" stroke-width="1" fill="none"/><path d="M944.500 38.500l3.800-.4-.6 3.700z" stroke="#222" stroke-width="0.4" fill="#222" /><circle cx="937.5" cy="43.0" r="2.2" stroke="#29a9e0" stroke-width="1.2" fill="none"/><circle cx="940.9000000000001" cy="43.0" r="2.2" stroke="#e2383f" stroke-width="1.2" fill="none"/><circle cx="937.5" cy="46.400000000000006" r="2.2" stroke="#f4a51c" stroke-width="1.2" fill="none"/><circle cx="940.9000000000001" cy="46.400000000000006" r="2.2" stroke="#53b848" stroke-width="1.2" fill="none"/><circle cx="970.4" cy="43.9" r="3.2" stroke="#29a9e0" stroke-width="1.7" fill="none"/><circle cx="975.6" cy="43.9" r="3.2" stroke="#e2383f" stroke-width="1.7" fill="none"/><circle cx="970.4" cy="49.1" r="3.2" stroke="#f4a51c" stroke-width="1.7" fill="none"/><circle cx="975.6" cy="49.1" r="3.2" stroke="#53b848" stroke-width="1.7" fill="none"/><path d="M976.500 41.500c.5-3 2.500-4.200 5.500-4" stroke="#222" stroke-width="1.6" fill="none" /><path d="M981.300 35l3.600 2.600-3.600 2.600z" stroke="#222" stroke-width="0.3" fill="#222" /><defs><linearGradient id="ga" x1="0" y1="0" x2="0" y2="1"><stop offset="0" stop-color="#2c98dd"/><stop offset="1" stop-color="#1a6fb5"/></linearGradient></defs><rect x="997.800" y="34.500" width="20.200" height="20.400" rx=".8" fill="url(#ga)"/><path d="M1005.600 38l2.300-1 2.300 1 2.200 14.500M1010.200 38l-4.400 14.500M1005.600 38l-2.200 14.500M1001 40.500c2.500-1.500 4-1.200 6.900-1.200s4.500-.3 7 1.200M1001 40.500v1.800M1014.900 40.500v1.800M1003.500 45h8.800M1002 52.500h11.800M1005.300 42.500l5.600 6M1010.500 42.500l-5.600 6" stroke="#0c1a24" stroke-width="0.8" fill="none" /><path d="M32.800 4.200h9.500v9h-9.500z" stroke="#111" stroke-width="0.6" fill="#2a2a10" /><path d="M34.500 4.500h6v3.500h-6z" stroke="#7a7a20" stroke-width="0.5" fill="#55551a" /><path d="M35 10h5v3h-5z" stroke="#41689c" stroke-width="0" fill="#f2f2f2" stroke-opacity="0"/><path d="M50 7.300h5.500c2.500 0 3.500 1.500 3.500 3.200s-1.200 2.800-3 2.800" stroke="#333" stroke-width="1.3" fill="none" /><path d="M53 4.300l-3.200 3 3.200 3" stroke="#333" stroke-width="1.3" fill="none" /><path d="M75.500 7.300h-5.500c-2.500 0-3.500 1.500-3.500 3.200s1.200 2.800 3 2.800" stroke="#b0b0b0" stroke-width="1.3" fill="none" /><path d="M72.500 4.300l3.200 3-3.200 3" stroke="#b0b0b0" stroke-width="1.3" fill="none" /><circle cx="86.3" cy="7.3" r="2.9" stroke="#222" stroke-width="1.3" fill="none"/><path d="M88.500 9.500l3.800 3.800" stroke="#222" stroke-width="1.6" fill="none" /><path d="M99.500 8l5-2.500 5 2v4l-5 2.500-5-2.500z" stroke="#222" stroke-width="0.8" fill="#9a9a9a" /><path d="M102 6.500l3.500-3 3 1.500-2.500 3z" stroke="#222" stroke-width="0.6" fill="#fff" /><path d="M101 9.300l1 .4" stroke="#3c3" stroke-width="0.9" fill="none" /><path d="M116.500 5h7.500l2 2.500v4.500h-9.500z" stroke="#222" stroke-width="1" fill="#fff" /><path d="M121 8h5v5h-3z" stroke="#222" stroke-width="0.8" fill="#888" /><path d="M145.7 5.300a4.600 4.600 0 1 0 .6 3.500" stroke="#555" stroke-width=".8" fill="none"/><circle cx="140.3" cy="7.4" r="1.3" stroke="#29a9e0" stroke-width="0.8" fill="none"/><circle cx="142.3" cy="7.4" r="1.3" stroke="#e2383f" stroke-width="0.8" fill="none"/><circle cx="140.3" cy="9.4" r="1.3" stroke="#f4a51c" stroke-width="0.8" fill="none"/><circle cx="142.3" cy="9.4" r="1.3" stroke="#53b848" stroke-width="0.8" fill="none"/><path d="M176.2 5.300a4.600 4.600 0 1 0 .6 3.500" stroke="#555" stroke-width=".8" fill="none"/><circle cx="170.8" cy="7.4" r="1.3" stroke="#29a9e0" stroke-width="0.8" fill="none"/><circle cx="172.8" cy="7.4" r="1.3" stroke="#e2383f" stroke-width="0.8" fill="none"/><circle cx="170.8" cy="9.4" r="1.3" stroke="#f4a51c" stroke-width="0.8" fill="none"/><circle cx="172.8" cy="9.4" r="1.3" stroke="#53b848" stroke-width="0.8" fill="none"/><circle cx="154.8" cy="7.5" r="1.9" stroke="#29a9e0" stroke-width="1" fill="none"/><circle cx="157.8" cy="7.5" r="1.9" stroke="#e2383f" stroke-width="1" fill="none"/><circle cx="154.8" cy="10.5" r="1.9" stroke="#f4a51c" stroke-width="1" fill="none"/><circle cx="157.8" cy="10.5" r="1.9" stroke="#53b848" stroke-width="1" fill="none"/><path d="M157.8 6.500l3.500-3" stroke="#333" stroke-width="1.3" fill="none" /><circle cx="185.3" cy="7.5" r="1.9" stroke="#29a9e0" stroke-width="1" fill="none"/><circle cx="188.3" cy="7.5" r="1.9" stroke="#e2383f" stroke-width="1" fill="none"/><circle cx="185.3" cy="10.5" r="1.9" stroke="#f4a51c" stroke-width="1" fill="none"/><circle cx="188.3" cy="10.5" r="1.9" stroke="#53b848" stroke-width="1" fill="none"/><path d="M188.3 6.500l3.500-3" stroke="#333" stroke-width="1.3" fill="none" /><path d="M199.600 5.300h8" stroke="#111" stroke-width="1.3" fill="none" /><path d="M199.800 7.800h7.600l-3.800 4z" stroke="#111" stroke-width="0.3" fill="#111" /><path d="M944 8.500h6.500" stroke="#fff" stroke-width="1" fill="none" /><path d="M975 6.500h5v5h-5zM976.500 6.500v-1.500h5v5h-1.500" stroke="#fff" stroke-width="0.8" fill="none" /><path d="M1005.300 5.300l6.200 6.200M1011.500 5.300l-6.200 6.200" stroke="#fff" stroke-width="1.1" fill="none" /><circle cx="899.3" cy="8" r="4.3" stroke="#e8eef5" stroke-width="0.5" fill="#dfe7ee"/><circle cx="902.3" cy="10.8" r="2.2" stroke="#fff" stroke-width="0.4" fill="#3aa84a"/><path d="M898 6.500c1-1 2-1 2.500 0s-.5 2.500-2.500 2" stroke="#9ab" stroke-width="0.7" fill="none" /><path d="M823.500 20.500h7v7h-7z" stroke="#111" stroke-width="1.1" fill="none" /><path d="M839.500 22.500h9M839.500 25.500h9M841.800 20v9M844.300 20v9M846.800 20v9M839.500 20v9M848.500 20v9M839.500 20h9M839.500 29h9" stroke="#666" stroke-width="0.6" fill="none" /><path d="M858.500 22h4.500v4.500h-4.500z" stroke="#555" stroke-width="0.8" fill="none" /><path d="M860.700 19.500v1M860.700 28v1M856 24.200h1M864.500 24.200h1M857.500 21l.7.700M863.800 21l-.7.700M857.500 27.500l.7-.7M863.800 27.500l-.7-.7" stroke="#777" stroke-width="0.7" fill="none" /><path d="M872.500 21.800h10v5h-10z" stroke="#444" stroke-width="0.8" fill="#666" /><path d="M874 24.300h7" stroke="#ddd" stroke-width="0.8" fill="none" /><path d="M889.500 20.500h9.500v5h-9.500z" stroke="#666" stroke-width="0.7" fill="#eee" /><path d="M889 27.500h10.500M889 29h10.500" stroke="#666" stroke-width="0.7" fill="none" /><path d="M891.500 23h5.500" stroke="#888" stroke-width="0.8" fill="none" /><path d="M907 20v8.500h8M907 24.500c2.500 0 4 1.500 4 4" stroke="#444" stroke-width="0.9" fill="none" /><circle cx="927" cy="24.2" r="3.8" stroke="#777" stroke-width="0.8" fill="none"/><path d="M927 24.200l2.600-1.500M927 24.200h3" stroke="#999" stroke-width="0.6" fill="none" /><path d="M939.800 20h8v8.500h-8z" stroke="#555" stroke-width="0.8" fill="#fff" /><path d="M939.800 20h8v1.800h-8z" stroke="#555" stroke-width="0.5" fill="#777" /><path d="M942.800 23.800h4v3.500h-4z" stroke="#e8762c" stroke-width="0.7" fill="#f6b48a" /><path d="M956.300 20.800h8.600v5.500h-5l-2.200 1.900v-1.900h-1.400z" stroke="#555" stroke-width="0.9" fill="none" /><path d="M973.500 20.500l7.500 7.500M981 20.500l-7.500 7.500" stroke="#222" stroke-width="1.4" fill="none" /><path d="M972.800 19.800l2 2M979.500 19.800l2.200 0 0 2.200" stroke="#222" stroke-width="1" fill="none" /><defs><radialGradient id="gg" cx=".35" cy=".3" r=".8"><stop offset="0" stop-color="#9fd0ff"/><stop offset=".5" stop-color="#1f6fe0"/><stop offset="1" stop-color="#0a2f9a"/></radialGradient></defs><circle cx="998.3" cy="24.2" r="5.2" stroke="#0a2f9a" stroke-width="0.4" fill="url(#gg)"/><path d="M995.200 21.800c.8-.9 2-1.300 3-1.100c-.4.700-.2 1.400.5 1.800c-.2.900-1 1.300-1.700 1.200c-.3.900-.2 1.900.4 2.700c-1-.2-1.900-1.200-2.300-2.400c-.300-.800-.300-1.500.100-2.200z" stroke="#dff0ff" stroke-width="0.2" fill="#e6f3ff" /><path d="M999.800 21.500c.8.100 1.500.500 2 1.100c-.300.800-.900 1.400-1.700 1.500c-.500-.700-.600-1.700-.300-2.600z" stroke="#cfe6ff" stroke-width="0.2" fill="#d6eaff" /><path d="M1010.200 23.200l5.400-4 4.600 2.800-5.400 4.400z" stroke="#5a0f5e" stroke-width="0.5" fill="#8c1c8e" /><path d="M1010.200 23.200v2.600l4.600 3.400 5.400-4.400v-3l-5.400 4.600z" stroke="#5a0f5e" stroke-width="0.5" fill="#f4f0f4" /><path d="M1010.200 25.800l4.600 3.400 5.400-4.400" stroke="#6a1470" stroke-width="0.9" fill="none" /><path d="M1014.200 22.700c.3-.8 1.200-1.200 1.700-.700c.700-.400 1.500.100 1.300.900c-.300.800-1.300 1.300-2.200 1.500c-.500-.400-.900-1-.800-1.700z" stroke="#e8b020" stroke-width="0.2" fill="#f2c230" /><path d="M1004.800 24.200l1.500 0l-.75 .9z" stroke="#888" stroke-width="0.1" fill="#888" /><path d="M1021.600 24.200l1.500 0l-.75 .9z" stroke="#888" stroke-width="0.1" fill="#888" /></svg>
<svg class="r" style="left:0.0px;top:0.0px;" width="220" height="280" viewBox="0 0 220 280"><path d="M5 106.500v8M5 108.500h3M5 111h3M5 113.500h3M3.500 115.500h4" stroke="#3a6ea8" stroke-width="0.9" fill="none"/><circle cx="8.500" cy="114.500" r="1.500" fill="#2d64b0"/><path d="M20.500 106.500h6.500v6.500h-6.500z" stroke="#9a9a9a" stroke-width="0.8" fill="#fafafa"/><path d="M18.200 109.300h6.500v6.500h-6.500z" stroke="#9a9a9a" stroke-width="0.8" fill="#c8c8c8"/><path d="M35 107.500l8 8M43 107.500l-8 8" stroke="#dc3a42" stroke-width="1.9" fill="none"/><rect x="49.0" y="105" width="1" height="13" fill="#cfcfcf"/><rect x="85.8" y="105" width="1" height="13" fill="#cfcfcf"/><rect x="179.0" y="105" width="1" height="13" fill="#cfcfcf"/><path d="M56.500 113.500l3.500-3.800 3.500 3.800z" stroke="#444" stroke-width="0.3" fill="#444"/><path d="M72.700 109.700l3.500 3.800 3.500-3.800z" stroke="#444" stroke-width="0.3" fill="#444"/><path d="M187.300 113.300l3.200-3.400 3.200 3.400z" stroke="#111" stroke-width="0.3" fill="#111"/><path d="M202.300 110.300l3.200 3.400 3.200-3.400z" stroke="#111" stroke-width="0.3" fill="#111"/><circle cx="6.200" cy="265.300" r="2.800" fill="none" stroke="#222" stroke-width="1.200"/><path d="M8.300 267.400l3.400 3.500" stroke="#222" stroke-width="1.5" fill="none"/><rect x="17.800" y="259.700" width="1" height="13" fill="#cfcfcf"/><path d="M24.7 266.300h8.500M28.0 262.300v8.500M28.0 263h5.200" stroke="#555" stroke-width="0.9" fill="none"/><path d="M29.299999999999997 266.900h4.600v4.400h-4.600z" stroke="#777" stroke-width="0.7" fill="#fff"/><path d="M29.299999999999997 269.100h4.600M31.6 266.900v4.400" stroke="#999" stroke-width="0.5" fill="none"/><path d="M40.8 266.300h8.500M44.099999999999994 262.300v8.500M44.099999999999994 263h5.200" stroke="#555" stroke-width="0.9" fill="none"/><path d="M45.4 266.900h4.600v4.400h-4.600z" stroke="#777" stroke-width="0.7" fill="#fff"/><path d="M45.4 269.100h4.600M47.699999999999996 266.900v4.400" stroke="#999" stroke-width="0.5" fill="none"/></svg>
<span class="t" style="left:232.5px;transform-origin:0 50%;top:118.6px;font-size:9.2px;line-height:12.0px;color:#1a1a1a;transform:scaleX(0.787);">Referência</span>
<span class="t" style="left:232.5px;transform-origin:0 50%;top:137.4px;font-size:9.2px;line-height:12.0px;color:#1a1a1a;transform:scaleX(0.859);">Comprimento (m)</span>
<span class="t" style="left:232.5px;transform-origin:0 50%;top:157.2px;font-size:9.2px;line-height:12.0px;color:#1a1a1a;transform:scaleX(0.807);">Polaridade</span>
<span class="t" style="left:232.5px;transform-origin:0 50%;top:179.0px;font-size:9.2px;line-height:12.0px;color:#1a1a1a;transform:scaleX(0.846);">Condutor</span>
<div class="r" style="left:333.7px;top:117.2px;width:135.6px;height:14.4px;background:#ffffff;border:1px solid #e3e3e3;border-bottom-color:#8f8f8f;border-right:none;"></div>
<span class="t" style="left:337.3px;transform-origin:0 50%;top:118.5px;font-size:9.2px;line-height:12.0px;color:#1a1a1a;transform:scaleX(0.803);">appliances 2</span>
<div class="r" style="left:456.7px;top:136.7px;width:12.6px;height:13.5px;background:#ffffff;border:1px solid #e3e3e3;border-bottom-color:#8f8f8f;border-right:none;"></div>
<div class="r" style="left:414.7px;top:154.2px;width:50.6px;height:15.9px;background:#ffffff;border:1px solid #adadad;border-radius:1.500px;"></div>
<span class="t" style="left:418.7px;transform-origin:0 50%;top:156.3px;font-size:9.2px;line-height:12.0px;color:#1a1a1a;transform:scaleX(0.799);">F+CPN</span>
<svg class="r" style="left:456.1px;top:159.9px;" width="7" height="5" viewBox="0 0 7 5"><path d="M0.800 0.900l2.700 2.800 2.700-2.800" stroke="#555" stroke-width="0.9" fill="none"/></svg>
<div class="r" style="left:386.2px;top:176.2px;width:83.1px;height:15.7px;background:#ffffff;border:1px solid #adadad;border-radius:1.500px;border-right:none;border-radius:1.500px 0 0 1.500px;"></div>
<span class="t" style="left:390.2px;transform-origin:0 50%;top:178.2px;font-size:9.2px;line-height:12.0px;color:#1a1a1a;transform:scaleX(0.778);">Cabo (IEC)</span>
<div class="r" style="left:232.2px;top:226.1px;width:55.2px;height:15.5px;background:#ffffff;border:1px solid #adadad;border-radius:1.500px;"></div>
<span class="t" style="left:236.2px;transform-origin:0 50%;top:228.0px;font-size:9.2px;line-height:12.0px;color:#1a1a1a;transform:scaleX(0.787);">450/750 V</span>
<svg class="r" style="left:278.2px;top:231.7px;" width="7" height="5" viewBox="0 0 7 5"><path d="M0.800 0.900l2.700 2.800 2.700-2.800" stroke="#555" stroke-width="0.9" fill="none"/></svg>
<div class="r" style="left:291.2px;top:226.1px;width:79.9px;height:15.5px;background:#ffffff;border:1px solid #adadad;border-radius:1.500px;"></div>
<span class="t" style="left:295.2px;transform-origin:0 50%;top:228.0px;font-size:9.2px;line-height:12.0px;color:#1a1a1a;transform:scaleX(0.834);">Cobre</span>
<svg class="r" style="left:361.9px;top:231.7px;" width="7" height="5" viewBox="0 0 7 5"><path d="M0.800 0.900l2.700 2.800 2.700-2.800" stroke="#555" stroke-width="0.9" fill="none"/></svg>
<div class="r" style="left:374.9px;top:226.1px;width:94.4px;height:15.5px;background:#ffffff;border:1px solid #adadad;border-radius:1.500px;border-right:none;border-radius:1.500px 0 0 1.500px;"></div>
<span class="t" style="left:378.9px;transform-origin:0 50%;top:228.0px;font-size:9.2px;line-height:12.0px;color:#1a1a1a;transform:scaleX(0.826);">Policloreto de vinilo (PVC)</span>
<div class="r" style="left:232.2px;top:252.8px;width:8.3px;height:8.3px;background:#ffffff;border:1px solid #8a8a8a;border-radius:1.500px;"></div>
<span class="t" style="left:242.9px;transform-origin:0 50%;top:250.9px;font-size:9.2px;line-height:12.0px;color:#1a1a1a;transform:scaleX(0.844);">Armado</span>
<div class="r" style="left:232.2px;top:274.2px;width:8.3px;height:8.3px;background:#ffffff;border:1px solid #8a8a8a;border-radius:1.500px;"></div>
<span class="t" style="left:242.9px;transform-origin:0 50%;top:272.3px;font-size:9.2px;line-height:12.0px;color:#1a1a1a;transform:scaleX(0.816);">Cobertura</span>
<span class="t" style="left:232.7px;transform-origin:0 50%;top:291.3px;font-size:9.2px;line-height:12.0px;color:#1a1a1a;transform:scaleX(0.798);">Classe de reacção ao fogo</span>
<div class="r" style="left:232.2px;top:306.6px;width:64.4px;height:16.0px;background:#ffffff;border:1px solid #adadad;border-radius:1.500px;"></div>
<span class="t" style="left:236.2px;transform-origin:0 50%;top:308.8px;font-size:9.2px;line-height:12.0px;color:#1a1a1a;transform:scaleX(0.707);">Eca</span>
<svg class="r" style="left:287.4px;top:312.4px;" width="7" height="5" viewBox="0 0 7 5"><path d="M0.800 0.900l2.700 2.800 2.700-2.800" stroke="#555" stroke-width="0.9" fill="none"/></svg>
<div class="r" style="left:306.0px;top:306.6px;width:59.8px;height:16.0px;background:#ffffff;border:1px solid #adadad;border-radius:1.500px;"></div>
<span class="t" style="left:310.0px;transform-origin:0 50%;top:308.8px;font-size:9.2px;line-height:12.0px;color:#1a1a1a;transform:scaleX(0.860);">-</span>
<svg class="r" style="left:356.6px;top:312.4px;" width="7" height="5" viewBox="0 0 7 5"><path d="M0.800 0.900l2.700 2.800 2.700-2.800" stroke="#555" stroke-width="0.9" fill="none"/></svg>
<div class="r" style="left:375.1px;top:306.6px;width:56.5px;height:16.0px;background:#ffffff;border:1px solid #adadad;border-radius:1.500px;"></div>
<span class="t" style="left:379.1px;transform-origin:0 50%;top:308.8px;font-size:9.2px;line-height:12.0px;color:#1a1a1a;transform:scaleX(0.860);">-</span>
<svg class="r" style="left:422.4px;top:312.4px;" width="7" height="5" viewBox="0 0 7 5"><path d="M0.800 0.900l2.700 2.800 2.700-2.800" stroke="#555" stroke-width="0.9" fill="none"/></svg>
<div class="r" style="left:441.2px;top:306.6px;width:28.1px;height:16.0px;background:#ffffff;border:1px solid #adadad;border-radius:1.500px;border-right:none;border-radius:1.500px 0 0 1.500px;"></div>
<span class="t" style="left:445.2px;transform-origin:0 50%;top:308.8px;font-size:9.2px;line-height:12.0px;color:#1a1a1a;transform:scaleX(0.860);">-</span>
<span class="t" style="left:232.7px;transform-origin:0 50%;top:331.4px;font-size:9.2px;line-height:12.0px;color:#1a1a1a;transform:scaleX(0.709);">Fase</span>
<div class="r" style="left:340.3px;top:328.5px;width:71.4px;height:16.0px;background:#ffffff;border:1px solid #adadad;border-radius:1.500px;"></div>
<span class="t" style="left:344.3px;transform-origin:0 50%;top:330.7px;font-size:9.2px;line-height:12.0px;color:#1a1a1a;transform:scaleX(0.826);">Unipolar</span>
<svg class="r" style="left:402.5px;top:334.3px;" width="7" height="5" viewBox="0 0 7 5"><path d="M0.800 0.900l2.700 2.800 2.700-2.800" stroke="#555" stroke-width="0.9" fill="none"/></svg>
<span class="t" style="left:232.7px;transform-origin:0 50%;top:353.0px;font-size:9.2px;line-height:12.0px;color:#1a1a1a;transform:scaleX(0.820);">Neutro e protecção comuns (PEN)</span>
<div class="r" style="left:352.1px;top:350.2px;width:59.6px;height:16.0px;background:#ffffff;border:1px solid #adadad;border-radius:1.500px;"></div>
<span class="t" style="left:356.1px;transform-origin:0 50%;top:352.4px;font-size:9.2px;line-height:12.0px;color:#1a1a1a;transform:scaleX(0.826);">Outra</span>
<svg class="r" style="left:402.5px;top:356.0px;" width="7" height="5" viewBox="0 0 7 5"><path d="M0.800 0.900l2.700 2.800 2.700-2.800" stroke="#555" stroke-width="0.9" fill="none"/></svg>
<div class="r" style="left:416.6px;top:330.0px;width:16.3px;height:14.0px;background:#ffffff;border:1px solid #e3e3e3;border-bottom-color:#8f8f8f;"></div>
<span class="t" style="left:424.9px;transform-origin:100% 50%;top:331.0px;font-size:9.2px;line-height:12.0px;color:#1a1a1a;transform:scaleX(0.900);">1</span>
<span class="t" style="left:438.3px;transform-origin:0 50%;top:329.0px;font-size:8px;line-height:10.4px;color:#1a1a1a;transform:scaleX(0.900);">x</span>
<div class="r" style="left:444.3px;top:328.5px;width:25.0px;height:16.0px;background:#ffffff;border:1px solid #adadad;border-radius:1.500px;border-right:none;border-radius:1.500px 0 0 1.500px;"></div>
<span class="t" style="left:448.3px;transform-origin:0 50%;top:330.7px;font-size:9.2px;line-height:12.0px;color:#1a1a1a;transform:scaleX(0.860);">6 mm²</span>
<div class="r" style="left:416.6px;top:351.7px;width:16.3px;height:14.0px;background:#ffffff;border:1px solid #e3e3e3;border-bottom-color:#8f8f8f;"></div>
<span class="t" style="left:424.9px;transform-origin:100% 50%;top:352.7px;font-size:9.2px;line-height:12.0px;color:#1a1a1a;transform:scaleX(0.900);">1</span>
<span class="t" style="left:438.3px;transform-origin:0 50%;top:350.7px;font-size:8px;line-height:10.4px;color:#1a1a1a;transform:scaleX(0.900);">x</span>
<div class="r" style="left:444.3px;top:350.2px;width:25.0px;height:16.0px;background:#ffffff;border:1px solid #adadad;border-radius:1.500px;border-right:none;border-radius:1.500px 0 0 1.500px;"></div>
<span class="t" style="left:448.3px;transform-origin:0 50%;top:352.4px;font-size:9.2px;line-height:12.0px;color:#1a1a1a;transform:scaleX(0.860);">10 mm²</span>
<div class="r" style="left:231.1px;top:375.9px;width:238.2px;height:22.2px;background:#eeede3;"></div>
<div class="r" style="left:324.5px;top:379.6px;width:80.5px;height:14.8px;background:#ffffff;border:1px solid #cfcfcf;border-radius:2px;"></div>
<svg class="r" style="left:326.5px;top:382.2px;" width="9.4" height="9.4" viewBox="0 0 9.4 9.4"><defs><radialGradient id="gq" cx=".4" cy=".3" r=".8"><stop offset="0" stop-color="#7fb2ff"/><stop offset=".6" stop-color="#2a62d8"/><stop offset="1" stop-color="#123a9a"/></radialGradient></defs><circle cx="4.700" cy="4.700" r="4.300" fill="url(#gq)" stroke="#9aa8c8" stroke-width=".6"/><text x="4.700" y="7.300" font-size="7" font-weight="bold" font-style="italic" fill="#fff" text-anchor="middle" font-family="Liberation Sans, sans-serif">?</text></svg>
<span class="t" style="left:339.8px;transform-origin:0 50%;top:380.9px;font-size:9.2px;line-height:12.0px;color:#1a1a1a;transform:scaleX(0.808);">Consultar selecção</span>
<div class="r" style="left:232.4px;top:433.6px;width:8.3px;height:8.3px;background:#ffffff;border:1px solid #8a8a8a;border-radius:1.500px;"></div>
<span class="t" style="left:243.0px;transform-origin:0 50%;top:431.7px;font-size:9.2px;line-height:12.0px;color:#1a1a1a;transform:scaleX(0.817);">Ligações ponte do quadro na cabeceira</span>
<div class="r" style="left:227.5px;top:547.5px;width:786.0px;height:12.6px;background:#e3e3e3;"></div>
<div class="r" style="left:258.2px;top:482.0px;width:1.0px;height:116.5px;background:#e6e6e6;"></div>
<div class="r" style="left:227.5px;top:508.3px;width:787.5px;height:1.0px;background:#f0f0f0;"></div>
<svg class="r" style="left:238.6px;top:498.5px;" width="8" height="8" viewBox="0 0 8 8"><path d="M0.500 3.600L1.700 2.700L2.900 4.500C3.900 2.800 5 1.500 6.700 0.400C5.400 2.300 4.100 4.700 3.100 7L2.300 6.900C1.800 5.600 1.200 4.500 0.500 3.600Z" fill="#08851c" stroke="#08851c" stroke-width=".5" stroke-linejoin="round"/></svg>
<span class="t" style="left:262.5px;transform-origin:0 50%;top:496.8px;font-size:9.2px;line-height:12.0px;color:#1a1a1a;transform:scaleX(0.794);">Condutores PEN (IEC 60364-5-54, ponto 543.4)</span>
<div class="r" style="left:227.5px;top:521.1px;width:787.5px;height:1.0px;background:#f0f0f0;"></div>
<svg class="r" style="left:238.6px;top:511.3px;" width="8" height="8" viewBox="0 0 8 8"><path d="M0.500 3.600L1.700 2.700L2.900 4.500C3.900 2.800 5 1.500 6.700 0.400C5.400 2.300 4.100 4.700 3.100 7L2.300 6.900C1.800 5.600 1.200 4.500 0.500 3.600Z" fill="#08851c" stroke="#08851c" stroke-width=".5" stroke-linejoin="round"/></svg>
<span class="t" style="left:262.5px;transform-origin:0 50%;top:509.6px;font-size:9.2px;line-height:12.0px;color:#1a1a1a;transform:scaleX(0.816);">Dimensões de tubos, calhas protectoras e caminhos de cabos</span>
<div class="r" style="left:227.5px;top:533.8px;width:787.5px;height:1.0px;background:#f0f0f0;"></div>
<svg class="r" style="left:238.6px;top:524.0px;" width="8" height="8" viewBox="0 0 8 8"><path d="M0.500 3.600L1.700 2.700L2.900 4.500C3.900 2.800 5 1.500 6.700 0.400C5.400 2.300 4.100 4.700 3.100 7L2.300 6.900C1.800 5.600 1.200 4.500 0.500 3.600Z" fill="#08851c" stroke="#08851c" stroke-width=".5" stroke-linejoin="round"/></svg>
<span class="t" style="left:262.5px;transform-origin:0 50%;top:522.3px;font-size:9.2px;line-height:12.0px;color:#1a1a1a;transform:scaleX(0.796);">Intensidade admissível (IEC 60364-5-52, Anexo B)</span>
<div class="r" style="left:227.5px;top:546.6px;width:787.5px;height:1.0px;background:#f0f0f0;"></div>
<svg class="r" style="left:238.6px;top:536.8px;" width="8" height="8" viewBox="0 0 8 8"><path d="M0.500 3.600L1.700 2.700L2.900 4.500C3.900 2.800 5 1.500 6.700 0.400C5.400 2.300 4.100 4.700 3.100 7L2.300 6.900C1.800 5.600 1.200 4.500 0.500 3.600Z" fill="#08851c" stroke="#08851c" stroke-width=".5" stroke-linejoin="round"/></svg>
<span class="t" style="left:262.5px;transform-origin:0 50%;top:535.1px;font-size:9.2px;line-height:12.0px;color:#1a1a1a;transform:scaleX(0.796);">Intensidade admissível (IEC 60364-5-52, Anexo B)</span>
<div class="r" style="left:227.5px;top:559.4px;width:787.5px;height:1.0px;background:#f0f0f0;"></div>
<svg class="r" style="left:238.6px;top:549.6px;" width="8" height="8" viewBox="0 0 8 8"><path d="M0.500 3.600L1.700 2.700L2.900 4.500C3.900 2.800 5 1.500 6.700 0.400C5.400 2.300 4.100 4.700 3.100 7L2.300 6.900C1.800 5.600 1.200 4.500 0.500 3.600Z" fill="#08851c" stroke="#08851c" stroke-width=".5" stroke-linejoin="round"/></svg>
<span class="t" style="left:262.5px;transform-origin:0 50%;top:547.9px;font-size:9.2px;line-height:12.0px;color:#1a1a1a;transform:scaleX(0.812);">Coordenação entre condutores e dispositivos de protecção contra sobrecargas (IEC 60364-4-43, ponto 433.1)</span>
<div class="r" style="left:227.5px;top:572.1px;width:787.5px;height:1.0px;background:#f0f0f0;"></div>
<svg class="r" style="left:238.6px;top:562.3px;" width="8" height="8" viewBox="0 0 8 8"><path d="M0.500 3.600L1.700 2.700L2.900 4.500C3.900 2.800 5 1.500 6.700 0.400C5.400 2.300 4.100 4.700 3.100 7L2.300 6.900C1.800 5.600 1.200 4.500 0.500 3.600Z" fill="#08851c" stroke="#08851c" stroke-width=".5" stroke-linejoin="round"/></svg>
<span class="t" style="left:262.5px;transform-origin:0 50%;top:560.6px;font-size:9.2px;line-height:12.0px;color:#1a1a1a;transform:scaleX(0.813);">Características dos dispositivos de protecção contra curto-circuitos (IEC 60364-4-43, ponto 434.5.1)</span>
<div class="r" style="left:227.5px;top:584.9px;width:787.5px;height:1.0px;background:#f0f0f0;"></div>
<svg class="r" style="left:238.6px;top:575.1px;" width="8" height="8" viewBox="0 0 8 8"><path d="M0.500 3.600L1.700 2.700L2.900 4.500C3.900 2.800 5 1.500 6.700 0.400C5.400 2.300 4.100 4.700 3.100 7L2.300 6.900C1.800 5.600 1.200 4.500 0.500 3.600Z" fill="#08851c" stroke="#08851c" stroke-width=".5" stroke-linejoin="round"/></svg>
<span class="t" style="left:262.5px;transform-origin:0 50%;top:573.4px;font-size:9.2px;line-height:12.0px;color:#1a1a1a;transform:scaleX(0.813);">Características dos dispositivos de protecção contra curto-circuitos (IEC 60364-4-43, ponto 434.5.2)</span>
<div class="r" style="left:227.5px;top:597.7px;width:787.5px;height:1.0px;background:#f0f0f0;"></div>
<svg class="r" style="left:238.6px;top:587.9px;" width="8" height="8" viewBox="0 0 8 8"><path d="M0.500 3.600L1.700 2.700L2.900 4.500C3.900 2.800 5 1.500 6.700 0.400C5.400 2.300 4.100 4.700 3.100 7L2.300 6.900C1.800 5.600 1.200 4.500 0.500 3.600Z" fill="#08851c" stroke="#08851c" stroke-width=".5" stroke-linejoin="round"/></svg>
<span class="t" style="left:262.5px;transform-origin:0 50%;top:586.2px;font-size:9.2px;line-height:12.0px;color:#1a1a1a;transform:scaleX(0.817);">Protecção contra contactos indirectos (IEC 60364-4-41, ponto 411.4)</span>
<span class="t" style="left:232.0px;transform-origin:0 50%;top:483.2px;font-size:9.2px;line-height:12.0px;color:#1a1a1a;transform:scaleX(0.772);">Estado</span>
<span class="t" style="left:262.5px;transform-origin:0 50%;top:483.2px;font-size:9.2px;line-height:12.0px;color:#1a1a1a;transform:scaleX(0.796);">Verificações</span>
<svg class="r" style="left:380.0px;top:250.0px;" width="100" height="240" viewBox="380 250 100 240"><path d="M401.600 476.500C409 462 423 438 424.300 404C425 375 414.500 345 414.600 303C414.800 285 422.500 270.800 445 269.100L459.500 269.200" stroke="#ff1a1a" stroke-width="2" fill="none"/><path d="M458.800 265l10.500 4.200-10.500 4.200z" fill="#ff1a1a"/></svg>
<div class="r" style="left:469.3px;top:110.5px;width:546.9px;height:361.7px;background:#f0f0f0;border:3px solid #185aa7;"></div>
<div class="r" style="left:469.3px;top:110.5px;width:546.9px;height:20.3px;background:#185aa7;"></div>
<div class="r" style="left:469.3px;top:110.5px;width:546.9px;height:1.0px;background:#114a93;"></div>
<span class="t" style="left:529.7px;transform-origin:0 50%;top:116.2px;font-size:9.2px;line-height:12.0px;color:#fff;transform:scaleX(0.813);-webkit-text-stroke:0;">Coordenação entre condutores e dispositivos de protecção contra sobrecargas (IEC 60364-4-43, ponto 433.1)</span>
<div class="r" style="left:477.0px;top:156.5px;width:521.0px;height:271.5px;background:#ffffff;"></div>
<div class="r" style="left:477.0px;top:156.3px;width:521.0px;height:1.8px;background:#4a4a4a;"></div>
<div class="r" style="left:477.0px;top:156.3px;width:1.4px;height:271.7px;background:#4a4a4a;"></div>
<div class="r" style="left:1002.2px;top:167.0px;width:1.3px;height:90.0px;background:#5a5a5a;"></div>
<div class="r" style="left:488.3px;top:432.8px;width:474.7px;height:1.2px;background:#6a6a6a;"></div>
<div class="r" style="left:472.3px;top:443.5px;width:540.9px;height:25.7px;background:#e9e9e9;"></div>
<div class="r" style="left:472.3px;top:443.5px;width:540.9px;height:1.0px;background:#dedede;"></div>
<div class="r" style="left:720.5px;top:448.6px;width:44.2px;height:16.4px;background:#fdfdfd;border:1px solid #4a8fdc;border-radius:2.500px;"></div>
<span class="t" style="left:728.5px;transform-origin:50% 50%;top:451.1px;font-size:9.2px;line-height:12.0px;color:#1a1a1a;transform:scaleX(0.824);">Aceitar</span>
<div class="r" style="left:702.8px;top:139.0px;width:28.6px;height:14.0px;background:#ffffff;"></div>
<div class="r" style="left:702.8px;top:151.8px;width:28.6px;height:1.5px;background:#2b7cd3;"></div>
<div class="r" style="left:725.9px;top:141.5px;width:0.8px;height:9.0px;background:#222;"></div>
<span class="t" style="left:727.0px;transform-origin:0 50%;top:140.2px;font-size:9.2px;line-height:12.0px;color:#444;transform:scaleX(0.800);">1</span>
<div class="r" style="left:767.2px;top:136.4px;width:55.1px;height:19.2px;background:#f2f2f2;border:1px solid #dddddd;border-radius:1.500px;"></div>
<span class="t" style="left:781.8px;transform-origin:50% 50%;top:140.1px;font-size:9.2px;line-height:12.0px;color:#1a1a1a;transform:scaleX(0.751);">1 de 1</span>
<span class="t" style="left:951.5px;transform-origin:0 50%;top:140.1px;font-size:9.2px;line-height:12.0px;color:#444;transform:scaleX(0.867);">Imprimir...</span>
<svg class="r" style="left:469.0px;top:110.0px;" width="548" height="50" viewBox="469 110 548 50"><path d="M677.500 142.500v7" stroke="#555" stroke-width="1.1" fill="none"/><path d="M682.300 142.500v7l-4-3.500z" stroke="#555" stroke-width="0.2" fill="#555"/><path d="M696.500 142.500v7l-4.300-3.500z" stroke="#555" stroke-width="0.2" fill="#555"/><path d="M738 142.500v7l4.300-3.500z" stroke="#555" stroke-width="0.2" fill="#555"/><path d="M752 142.500v7l4-3.500z" stroke="#555" stroke-width="0.2" fill="#555"/><path d="M756.800 142.500v7" stroke="#555" stroke-width="1.1" fill="none"/><path d="M480.300 138.500h8.500v11.500h-8.500z" stroke="#7a7a7a" stroke-width="1" fill="#d2d2d2"/><circle cx="486.3" cy="144.5" r="3.6" stroke="#555" stroke-width="1" fill="#f2f2f2"/><path d="M485 142.500v4M487.300 142.500v4" stroke="#aaa" stroke-width="0.7" fill="none"/><path d="M489 147.500l5.500 5" stroke="#111" stroke-width="1.7" fill="none"/><path d="M502.500 139.500h6l2.500 2.500v10.500h-8.500z" stroke="#999" stroke-width="0.8" fill="#f8f8f8"/><path d="M502 146.700h3.500M508.500 146.700h3.500" stroke="#111" stroke-width="1.7" fill="none"/><path d="M503.300 144l-4.200 2.700 4.200 2.700zM510.700 144l4.200 2.700-4.200 2.700z" stroke="#111" stroke-width="0.3" fill="#111"/><circle cx="525.3" cy="144" r="4.2" stroke="#444" stroke-width="1" fill="none"/><path d="M528.3 147l4.800 5" stroke="#111" stroke-width="1.7" fill="none"/><path d="M523.3 144h4" stroke="#777" stroke-width="0.9" fill="none"/><path d="M525.3 142v4" stroke="#777" stroke-width="0.9" fill="none"/><circle cx="544.3" cy="144" r="4.2" stroke="#444" stroke-width="1" fill="none"/><path d="M547.3 147l4.800 5" stroke="#111" stroke-width="1.7" fill="none"/><path d="M542.3 144h4" stroke="#777" stroke-width="0.9" fill="none"/><path d="M557.500 145h6v8h-6z" stroke="#bbb" stroke-width="0.8" fill="#eee"/><circle cx="564.3" cy="143" r="4.2" stroke="#444" stroke-width="1" fill="none"/><path d="M561 141.500h5v3.500h-5z" stroke="#777" stroke-width="0.8" fill="none"/><path d="M567.300 146l4.800 5" stroke="#111" stroke-width="1.7" fill="none"/><path d="M936.500 144.500v-6h5.500l2.500 2.500v3.500" stroke="#444" stroke-width="0.9" fill="#fff"/><path d="M934.300 144.500h13v6.500h-13z" stroke="#444" stroke-width="0.9" fill="#fff"/><path d="M934.300 148.500h13" stroke="#444" stroke-width="0.9" fill="none"/><circle cx="1001.67" cy="147.65" r="1.5" stroke="#4a4a4a" stroke-width="0.8" fill="#f0f0f0"/><circle cx="999.35" cy="149.97" r="1.5" stroke="#4a4a4a" stroke-width="0.8" fill="#f0f0f0"/><circle cx="996.05" cy="149.97" r="1.5" stroke="#4a4a4a" stroke-width="0.8" fill="#f0f0f0"/><circle cx="993.73" cy="147.65" r="1.5" stroke="#4a4a4a" stroke-width="0.8" fill="#f0f0f0"/><circle cx="993.73" cy="144.35" r="1.5" stroke="#4a4a4a" stroke-width="0.8" fill="#f0f0f0"/><circle cx="996.05" cy="142.03" r="1.5" stroke="#4a4a4a" stroke-width="0.8" fill="#f0f0f0"/><circle cx="999.35" cy="142.03" r="1.5" stroke="#4a4a4a" stroke-width="0.8" fill="#f0f0f0"/><circle cx="1001.67" cy="144.35" r="1.5" stroke="#4a4a4a" stroke-width="0.8" fill="#f0f0f0"/><circle cx="997.7" cy="146" r="3.9" stroke="#f0f0f0" stroke-width="0.1" fill="#f0f0f0"/><circle cx="997.7" cy="146" r="1.7" stroke="#4a4a4a" stroke-width="0.8" fill="none"/><path d="M963.500 119h6.500v6.500h-6.500z" stroke="#fff" stroke-width="0.9" fill="none"/><path d="M994.500 119.300l6.200 6.200M1000.700 119.300l-6.200 6.200" stroke="#fff" stroke-width="1.1" fill="none"/></svg>
<div class="r" style="left:533.2px;top:201.2px;font-size:12px;line-height:14.2px;font-family:'DejaVu Sans',sans-serif;color:#222;font-weight:bold;color:#111;white-space:nowrap;letter-spacing:-0.020px;">Coordenação entre condutores e dispositivos de protecção contra</div>
<div class="r" style="left:533.2px;top:215.4px;font-size:12px;line-height:14.2px;font-family:'DejaVu Sans',sans-serif;color:#222;font-weight:bold;color:#111;white-space:nowrap;letter-spacing:0.200px;">sobrecargas (IEC 60364-4-43, ponto 433.1)</div>
<div class="r" style="left:533.2px;top:229.2px;width:457.0px;height:1.0px;background:#333;"></div>
<div class="r" style="left:533.2px;top:246.6px;font-size:8.4px;line-height:9.5px;font-family:'DejaVu Sans',sans-serif;color:#222;width:457.0px;text-align:justify;">As características de funcionamento de um dispositivo que protege um cabo contra sobrecargas devem satisfazer as duas seguintes condições:</div>
<div class="r" style="left:652.6px;top:281.0px;font-size:8.4px;line-height:11px;font-family:'DejaVu Sans',sans-serif;color:#222;width:200.0px;text-align:center;color:#222;white-space:nowrap;letter-spacing:0;word-spacing:-.900px;"><span style="font-family:'Liberation Serif',serif;font-weight:bold;font-size:8.600px;color:#2a2a2a;">I</span><span style="font-size:4.500px;color:#666;position:relative;top:1.200px;letter-spacing:0;font-style:normal;">B</span> ≤ <span style="font-family:'Liberation Serif',serif;font-weight:bold;font-size:8.600px;color:#2a2a2a;">I</span><span style="font-size:4.500px;color:#666;position:relative;top:1.200px;letter-spacing:0;font-style:normal;">n</span> ≤ <span style="font-family:'Liberation Serif',serif;font-weight:bold;font-size:8.600px;color:#2a2a2a;">I</span><span style="font-size:4.500px;color:#666;position:relative;top:1.200px;letter-spacing:0;font-style:normal;">Z</span></div>
<div class="r" style="left:652.6px;top:297.2px;font-size:8.4px;line-height:11px;font-family:'DejaVu Sans',sans-serif;color:#222;width:200.0px;text-align:center;color:#222;white-space:nowrap;letter-spacing:.080px;word-spacing:-.300px;"><span style="font-family:'Liberation Serif',serif;font-weight:bold;font-size:8.600px;color:#2a2a2a;">I</span><span style="font-size:4.500px;color:#666;position:relative;top:1.200px;letter-spacing:0;font-style:normal;">2</span> ≤ 1,45 x <span style="font-family:'Liberation Serif',serif;font-weight:bold;font-size:8.600px;color:#2a2a2a;">I</span><span style="font-size:4.500px;color:#666;position:relative;top:1.200px;letter-spacing:0;font-style:normal;">Z</span> = <i style="letter-spacing:.180px;">51.72 A</i></div>
<svg class="r" style="left:974.0px;top:278.6px;" width="15" height="15" viewBox="0 0 15 15"><path d="M1.200 7.900L3.300 6.400L5.400 9.300C7.500 6 10 3.200 13.600 1C10.600 4.700 7.600 9.200 5.500 13.200L4.100 13C3.300 11 2.300 9.400 1.200 7.900Z" fill="#0a9636" stroke="#0a9636" stroke-width=".5" stroke-linejoin="round"/></svg>
<svg class="r" style="left:974.0px;top:294.0px;" width="15" height="15" viewBox="0 0 15 15"><path d="M1.200 7.900L3.300 6.400L5.400 9.300C7.500 6 10 3.200 13.600 1C10.600 4.700 7.600 9.200 5.500 13.200L4.100 13C3.300 11 2.300 9.400 1.200 7.900Z" fill="#0a9636" stroke="#0a9636" stroke-width=".5" stroke-linejoin="round"/></svg>
<div class="r" style="left:535.9px;top:322.6px;font-size:8.4px;line-height:9.6px;font-family:'DejaVu Sans',sans-serif;color:#222;">Com:</div>
<div class="r" style="left:564.2px;top:333.6px;font-size:8.4px;line-height:11px;font-family:'DejaVu Sans',sans-serif;color:#222;white-space:nowrap;"><span style="font-family:'Liberation Serif',serif;font-weight:bold;font-size:8.600px;color:#2a2a2a;">I</span><span style="font-size:4.500px;color:#666;position:relative;top:1.200px;letter-spacing:0;font-style:normal;">B</span></div>
<div class="r" style="left:581.0px;top:335.1px;font-size:8.4px;line-height:9.9px;font-family:'DejaVu Sans',sans-serif;color:#222;white-space:nowrap;">Intensidade de cálculo do circuito <i style="letter-spacing:.180px;">(27.06 A)</i></div>
<div class="r" style="left:564.2px;top:346.0px;font-size:8.4px;line-height:11px;font-family:'DejaVu Sans',sans-serif;color:#222;white-space:nowrap;"><span style="font-family:'Liberation Serif',serif;font-weight:bold;font-size:8.600px;color:#2a2a2a;">I</span><span style="font-size:4.500px;color:#666;position:relative;top:1.200px;letter-spacing:0;font-style:normal;">n</span></div>
<div class="r" style="left:581.0px;top:347.5px;font-size:8.4px;line-height:9.9px;font-family:'DejaVu Sans',sans-serif;color:#222;white-space:nowrap;">Intensidade atribuída do dispositivo de protecção <i style="letter-spacing:.180px;">(Interruptor automático, 32.00 A)</i></div>
<div class="r" style="left:564.2px;top:370.1px;font-size:8.4px;line-height:11px;font-family:'DejaVu Sans',sans-serif;color:#222;white-space:nowrap;"><span style="font-family:'Liberation Serif',serif;font-weight:bold;font-size:8.600px;color:#2a2a2a;">I</span><span style="font-size:4.500px;color:#666;position:relative;top:1.200px;letter-spacing:0;font-style:normal;">Z</span></div>
<div class="r" style="left:581.0px;top:371.6px;font-size:8.4px;line-height:9.9px;font-family:'DejaVu Sans',sans-serif;color:#222;white-space:nowrap;">Intensidade permanente admissível do cabo <i style="letter-spacing:.180px;">(35.67 A)</i></div>
<div class="r" style="left:564.2px;top:383.5px;font-size:8.4px;line-height:11px;font-family:'DejaVu Sans',sans-serif;color:#222;white-space:nowrap;"><span style="font-family:'Liberation Serif',serif;font-weight:bold;font-size:8.600px;color:#2a2a2a;">I</span><span style="font-size:4.500px;color:#666;position:relative;top:1.200px;letter-spacing:0;font-style:normal;">2</span></div>
<div class="r" style="left:581.0px;top:385.0px;font-size:8.4px;line-height:9.9px;font-family:'DejaVu Sans',sans-serif;color:#222;white-space:nowrap;">Intensidade efectiva garantida em funcionamento no tempo convencional do dispositivo de<br>protecção<i style="letter-spacing:.180px;margin-left:.500px;">(46.40 A)</i></div>
<div class="r" style="left:581.0px;top:359.2px;font-size:6.9px;line-height:8px;font-family:'DejaVu Sans',sans-serif;color:#222;white-space:nowrap;word-spacing:-2.300px;letter-spacing:.120px;">Para dispositivos de protecção ajustáveis, a intensidade atribuída I é a corrente seleccionada</div>
</body></html>
